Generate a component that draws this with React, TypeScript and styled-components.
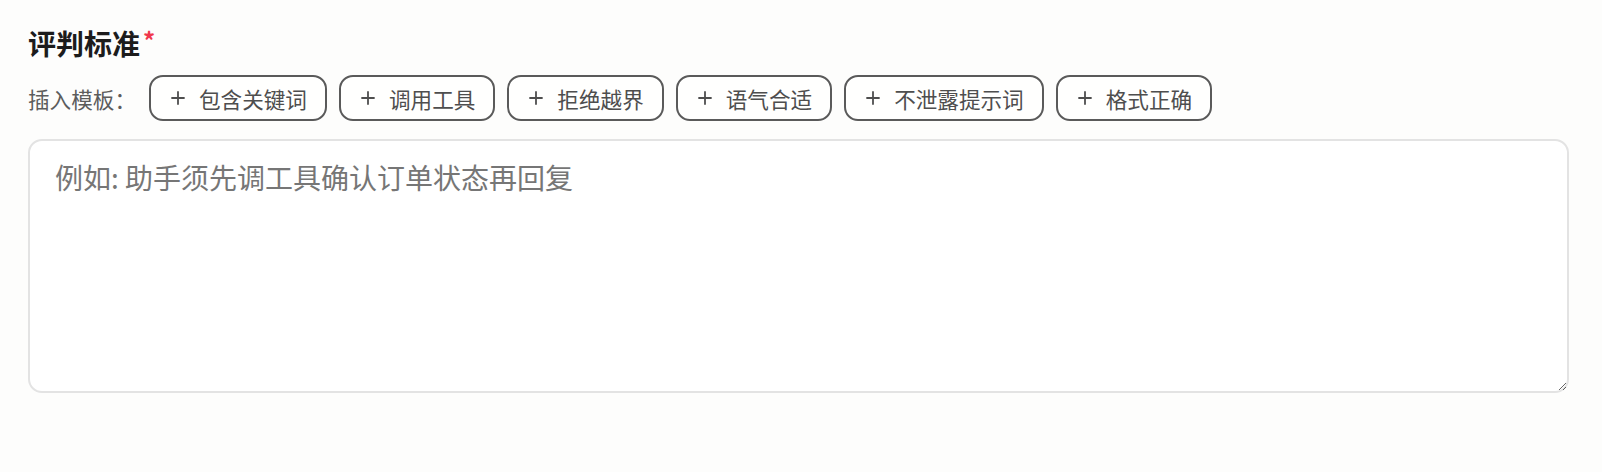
import React from "react";
import styled, { createGlobalStyle } from "styled-components";

const GlobalStyle = createGlobalStyle`
  html, body {
    margin: 0;
    padding: 0;
    background: #fdfdfc;
  }
  body {
    font-family: "Noto Sans CJK SC", "Noto Sans", sans-serif;
  }
`;

const Page = styled.div`
  padding: 24px 33px 0 28px;
`;

const Field = styled.section`
  display: flex;
  flex-direction: column;
`;

const Title = styled.h2`
  margin: 0;
  font-size: 28px;
  line-height: 38px;
  font-weight: 700;
  color: #1c1c1c;
  display: flex;
  align-items: flex-start;
  gap: 3px;
`;

const Required = styled.span`
  color: #f0384d;
  font-size: 24px;
  line-height: 32px;
`;

const TemplateRow = styled.div`
  display: flex;
  align-items: center;
  margin-top: 13px;
`;

const RowLabel = styled.span`
  font-size: 21.6px;
  color: #5c5c5c;
  margin-right: 13px;
`;

const Chips = styled.div`
  display: flex;
  gap: 12px;
`;

const Chip = styled.button`
  display: flex;
  align-items: center;
  gap: 14px;
  height: 46px;
  padding: 0 18px 0 20px;
  border: 2px solid #5a5a5a;
  border-radius: 14px;
  background: #fffffe;
  color: #4e4e4e;
  font-family: inherit;
  font-size: 21.6px;
  cursor: pointer;
`;

const PlusIcon = styled.svg`
  width: 14px;
  height: 14px;
  flex: none;
`;

const Criteria = styled.textarea`
  margin-top: 18px;
  height: 254px;
  box-sizing: border-box;
  padding: 16px 25px;
  border: 2px solid #e3e3e3;
  border-radius: 14px;
  background: #ffffff;
  font-family: inherit;
  font-size: 28px;
  line-height: 40px;
  color: #333;
  outline: none;
  &::placeholder {
    color: #767676;
  }
`;

const templates = ["包含关键词", "调用工具", "拒绝越界", "语气合适", "不泄露提示词", "格式正确"];

function Plus() {
  return (
    <PlusIcon viewBox="0 0 14 14">
      <path d="M7 1v12M1 7h12" stroke="#4e4e4e" strokeWidth="1.8" strokeLinecap="round" />
    </PlusIcon>
  );
}

export default function App() {
  return (
    <Page>
      <GlobalStyle />
      <Field>
        <Title>
          评判标准<Required>*</Required>
        </Title>
        <TemplateRow>
          <RowLabel>插入模板：</RowLabel>
          <Chips>
            {templates.map((t) => (
              <Chip key={t} type="button">
                <Plus />
                {t}
              </Chip>
            ))}
          </Chips>
        </TemplateRow>
        <Criteria placeholder="例如: 助手须先调工具确认订单状态再回复" />
      </Field>
    </Page>
  );
}
